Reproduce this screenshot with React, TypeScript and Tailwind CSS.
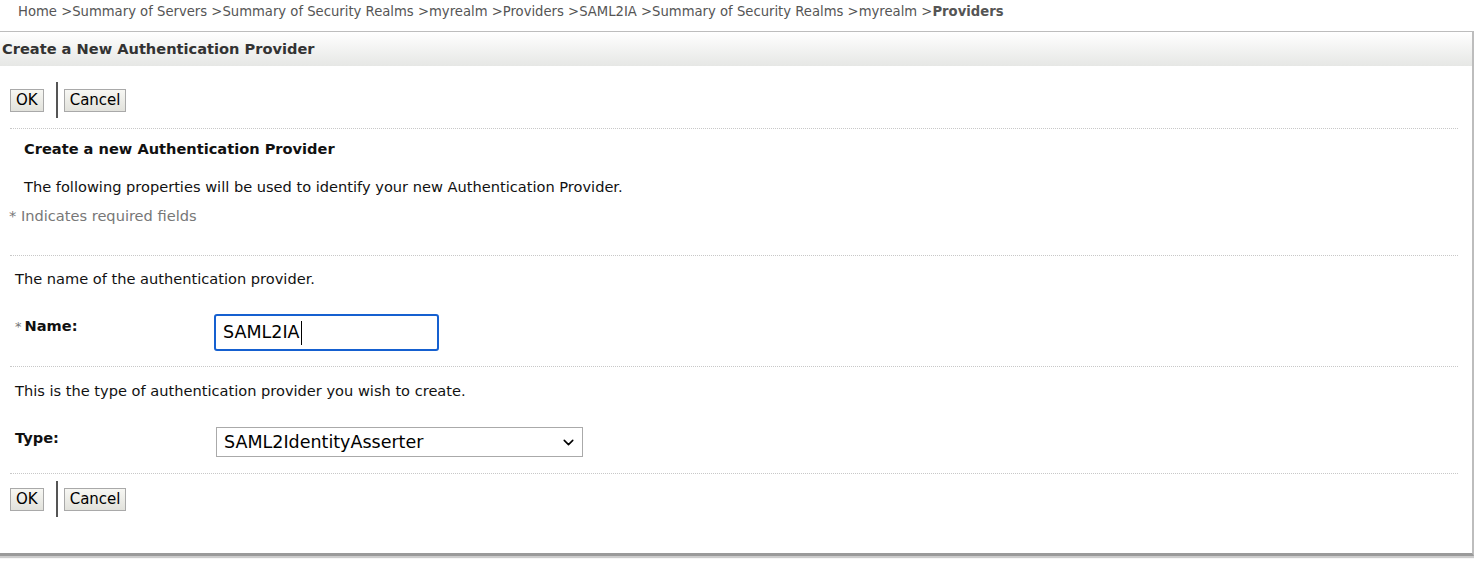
import { ChevronDown } from 'lucide-react';

const crumbs = [
  'Home',
  'Summary of Servers',
  'Summary of Security Realms',
  'myrealm',
  'Providers',
  'SAML2IA',
  'Summary of Security Realms',
  'myrealm',
];

function Buttons() {
  return (
    <div className="flex items-center h-[36px] pl-[10px]">
      <button className="h-[23px] px-[5px] border border-[#a9a9a9] bg-gradient-to-b from-[#f7f7f3] to-[#e2e2dc] text-[15px] text-black leading-none">
        OK
      </button>
      <div className="w-[2px] h-[36px] bg-[#555] ml-[12px] mr-[6px]" />
      <button className="h-[23px] px-[5px] border border-[#a9a9a9] bg-gradient-to-b from-[#f7f7f3] to-[#e2e2dc] text-[15px] text-black leading-none">
        Cancel
      </button>
    </div>
  );
}

function Dotted() {
  return <div className="mx-[10px] mr-[14px] border-t border-dotted border-[#c8c8c8]" />;
}

export default function App() {
  return (
    <div className="w-[1474px] h-[569px] bg-white font-['DejaVu_Sans',sans-serif] text-[14.6px] text-[#111]">
      <div className="h-[31px] pl-[18px] pt-[3px] text-[13.2px] text-[#555] leading-[17px]">
        {crumbs.map((c, i) => (
          <span key={i}>{c} &gt;</span>
        ))}
        <span className="font-bold">Providers</span>
      </div>

      <div className="w-[1474px] h-[525px] border-t border-r-2 border-[#bdbdbd] border-b-[3px] border-b-[#9a9a9a] shadow-[0_2px_1px_#ccc] flex flex-col">
        <div className="h-[34px] bg-gradient-to-b from-white to-[#e6e7e5] pl-[2px] flex items-center font-bold text-[#333]">
          Create a New Authentication Provider
        </div>

        <div className="pt-[16px]">
          <Buttons />
        </div>
        <div className="mt-[10px]">
          <Dotted />
        </div>

        <div className="pl-[24px] pt-[10px] font-bold leading-[20px]">Create a new Authentication Provider</div>
        <div className="pl-[24px] pt-[18px] leading-[20px]">
          The following properties will be used to identify your new Authentication Provider.
        </div>
        <div className="pl-[9px] pt-[9px] leading-[20px] text-[#777]">* Indicates required fields</div>

        <div className="mt-[29px]">
          <Dotted />
        </div>

        <div className="pl-[15px] pt-[13px] leading-[20px]">The name of the authentication provider.</div>

        <div className="flex pl-[15px] pt-[25px] h-[77px]">
          <div className="w-[199px] pt-[2px] font-bold leading-[20px]">
            <span className="text-[#777] font-normal text-[13px] mr-[3px]">*</span>
            Name:
          </div>
          <div className="w-[225px] h-[37px] border-2 border-[#1560d0] rounded-[3px] flex items-center pl-[7px] text-[17.5px] text-black">
            SAML2IA
            <span className="w-px h-[24px] bg-black ml-px" />
          </div>
        </div>

        <Dotted />

        <div className="pl-[15px] pt-[14px] leading-[20px]">
          This is the type of authentication provider you wish to create.
        </div>

        <div className="flex pl-[15px] pt-[26px] h-[72px]">
          <div className="w-[201px] pt-[1px] font-bold leading-[20px]">Type:</div>
          <div className="w-[367px] h-[30px] border border-[#aaa] flex items-center justify-between pl-[7px] pr-[5px] text-[17.5px] text-black">
            SAML2IdentityAsserter
            <ChevronDown className="w-[17px] h-[17px]" strokeWidth={2.2} />
          </div>
        </div>

        <Dotted />

        <div className="pt-[7px]">
          <Buttons />
        </div>
      </div>
    </div>
  );
}
